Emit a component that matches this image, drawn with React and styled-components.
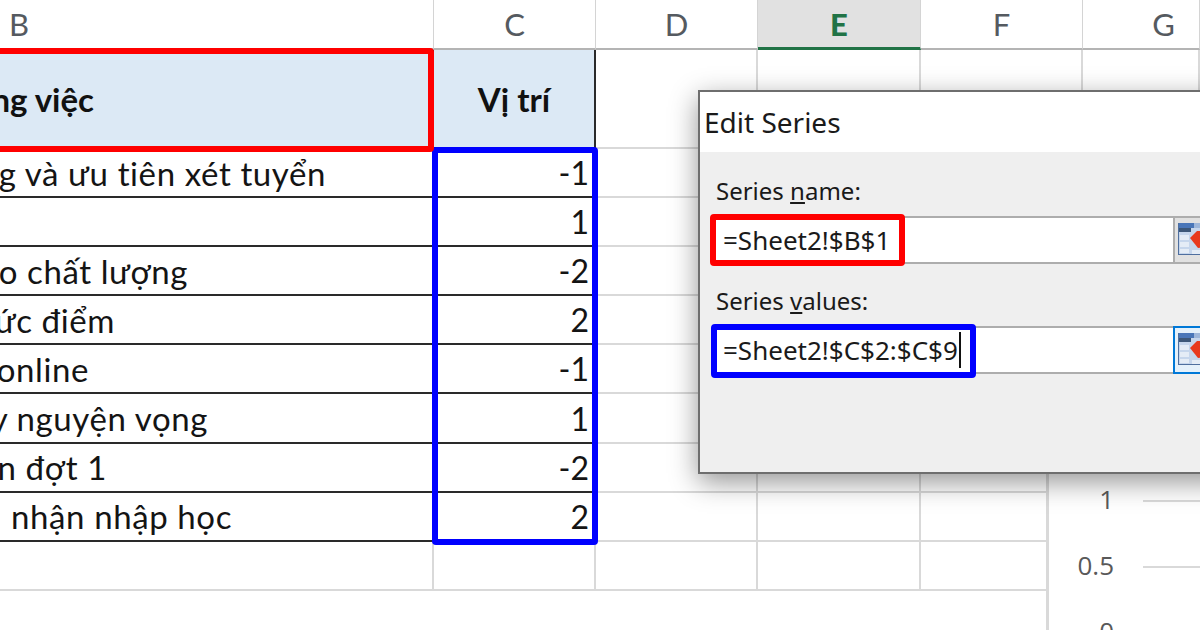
import React from "react";
import styled, { createGlobalStyle } from "styled-components";

const GlobalStyle = createGlobalStyle`
  html, body {
    margin: 0;
    padding: 0;
    overflow: hidden;
    background: #fff;
  }
`;

const COLUMNS = "434px 162px 162px 163px 162px 117px";

const rows = [
  { task: "g và ưu tiên xét tuyển", end: 108, pos: "-1" },
  { task: "", end: 0, pos: "1" },
  { task: "o chất lượng", end: 246, pos: "-2" },
  { task: "ức điểm", end: 319, pos: "2" },
  { task: "online", end: 345, pos: "-1" },
  { task: "y nguyện vọng", end: 226, pos: "1" },
  { task: "n đợt 1", end: 327, pos: "-2" },
  { task: "nhận nhập học", end: 202, pos: "2" },
];

const App = () => {
  return (
    <Sheet>
      <GlobalStyle />
      <HeaderRow>
        <ColHead $end={404}>B</ColHead>
        <ColHead>C</ColHead>
        <ColHead>D</ColHead>
        <ColHead $active>E</ColHead>
        <ColHead>F</ColHead>
        <ColHead $pad={0}>G</ColHead>
      </HeaderRow>

      <TitleRow>
        <TitleCell $end={338}>ng việc</TitleCell>
        <TitleCell>Vị trí</TitleCell>
        <EmptyCell />
        <EmptyCell />
        <EmptyCell />
        <EmptyCell />
      </TitleRow>

      {rows.map((row) => (
        <Row key={row.pos + row.end}>
          <TaskCell $end={row.end}>{row.task}</TaskCell>
          <ValueCell>{row.pos}</ValueCell>
          <EmptyCell />
          <EmptyCell />
          <EmptyCell />
          <EmptyCell />
        </Row>
      ))}
      <Row>
        <EmptyCell />
        <EmptyCell />
        <EmptyCell />
        <EmptyCell />
        <EmptyCell />
        <EmptyCell />
      </Row>

      <BlueRange />
      <RedRange />

      <Chart>
        <AxisRow $top={27}>
          <AxisLabel>1</AxisLabel>
          <AxisLine />
        </AxisRow>
        <AxisRow $top={93}>
          <AxisLabel>0.5</AxisLabel>
          <AxisLine />
        </AxisRow>
        <AxisRow $top={159}>
          <AxisLabel>0</AxisLabel>
          <AxisLine />
        </AxisRow>
      </Chart>

      <Dialog>
        <DialogTitle>Edit Series</DialogTitle>
        <DialogBody>
          <FieldLabel>
            Series <u>n</u>ame:
          </FieldLabel>
          <Field>
            <FieldInput>
              =Sheet2!$B$1
              <FieldMark $color="#ff0000" $left={-6} $top={-4} $width={195} $height={52} />
            </FieldInput>
            <RangeButton>
              <RangeIcon />
            </RangeButton>
          </Field>
          <FieldLabel $gap={22}>
            Series <u>v</u>alues:
          </FieldLabel>
          <Field>
            <FieldInput>
              =Sheet2!$C$2:$C$9
              <Caret />
              <FieldMark $color="#0000ff" $left={-5} $top={-4} $width={265} $height={54} />
            </FieldInput>
            <RangeButton $focused>
              <RangeIcon />
            </RangeButton>
          </Field>
        </DialogBody>
      </Dialog>
    </Sheet>
  );
};

// range picker button, only the left part shows in the crop
const RangeIcon = () => (
  <svg width="34" height="34" viewBox="0 0 34 34">
    <rect x="0" y="0" width="34" height="32" fill="#c6d6ec" />
    <rect x="0" y="0" width="16" height="5" fill="#4a76b8" />
    <rect x="16" y="0" width="18" height="5" fill="#9db6da" />
    <rect x="0" y="5" width="13" height="4" fill="#3d5778" />
    <rect x="2" y="12" width="9" height="5" fill="#e4ecf6" />
    <rect x="2" y="19" width="9" height="5" fill="#e4ecf6" />
    <rect x="2" y="26" width="9" height="4" fill="#e4ecf6" />
    <rect x="0" y="0" width="1" height="32" fill="#4f6f9f" />
    <rect x="0" y="31" width="34" height="1" fill="#4f6f9f" />
    <path d="M12 15 L19 8 H34 V22 L26 24 L20 25 Z" fill="#e8391d" />
    <rect x="14" y="27" width="20" height="4" fill="#e4ecf6" />
  </svg>
);

export default App;

const Sheet = styled.div`
  position: relative;
  width: 1200px;
  height: 630px;
  overflow: hidden;
  background: #fff;
  font-family: "Lato", "Liberation Sans", sans-serif;
  color: #141414;
`;

const HeaderRow = styled.div`
  display: grid;
  grid-template-columns: ${COLUMNS};
  height: 50px;
`;

const ColHead = styled.div`
  display: flex;
  align-items: center;
  justify-content: ${(p) => (p.$end ? "flex-end" : "center")};
  padding-right: ${(p) => (p.$end ? `${p.$end}px` : "0")};
  padding-left: ${(p) => (p.$pad === 0 ? "45px" : "0")};
  font-size: 31px;
  box-sizing: border-box;
  color: ${(p) => (p.$active ? "#217346" : "#555a60")};
  font-weight: ${(p) => (p.$active ? 900 : 400)};
  background: ${(p) => (p.$active ? "#e1e1e1" : "#fff")};
  border-right: 1px solid #d4d4d4;
  border-bottom: ${(p) => (p.$active ? "3px solid #217346" : "2px solid #b4b4b4")};
`;

const TitleRow = styled.div`
  display: grid;
  grid-template-columns: ${COLUMNS};
  height: 99px;
`;

const TitleCell = styled.div`
  display: flex;
  align-items: center;
  justify-content: ${(p) => (p.$end ? "flex-end" : "center")};
  padding-right: ${(p) => (p.$end ? `${p.$end}px` : "0")};
  box-sizing: border-box;
  background: #dce9f5;
  font-size: 33px;
  font-weight: 700;
  white-space: nowrap;
  color: #111;
  border-bottom: 2px solid #2a2a2a;
  border-right: 2px solid #2a2a2a;
`;

const Row = styled.div`
  display: grid;
  grid-template-columns: ${COLUMNS};
  height: 49.1px;
`;

const TaskCell = styled.div`
  display: flex;
  align-items: center;
  justify-content: flex-end;
  padding-right: ${(p) => p.$end}px;
  box-sizing: border-box;
  font-size: 33px;
  letter-spacing: 0.6px;
  white-space: nowrap;
  overflow: hidden;
  border-bottom: 2px solid #2a2a2a;
`;

const ValueCell = styled.div`
  display: flex;
  align-items: center;
  justify-content: flex-end;
  padding-right: 5px;
  box-sizing: border-box;
  font-size: 32px;
  border-bottom: 2px solid #2a2a2a;
  border-right: 2px solid #2a2a2a;
`;

const EmptyCell = styled.div`
  box-sizing: border-box;
  border-right: 2px solid #d9d9d9;
  border-bottom: 2px solid #d9d9d9;
`;

const RedRange = styled.div`
  position: absolute;
  left: -10px;
  top: 48px;
  width: 444px;
  height: 104px;
  box-sizing: border-box;
  border: 6px solid #ff0000;
  border-radius: 4px;
`;

const BlueRange = styled.div`
  position: absolute;
  left: 432px;
  top: 147px;
  width: 166px;
  height: 398px;
  box-sizing: border-box;
  border: 6px solid #0000ff;
  border-radius: 4px;
`;

const Chart = styled.div`
  position: absolute;
  left: 1046px;
  top: 473px;
  width: 154px;
  height: 157px;
  background: #fff;
  border-left: 3px solid #d9d9d9;
`;

const AxisRow = styled.div`
  position: absolute;
  left: 0;
  right: 0;
  top: ${(p) => p.$top}px;
  display: flex;
  align-items: center;
  height: 2px;
`;

const AxisLabel = styled.span`
  width: 65px;
  margin-top: -4px;
  text-align: right;
  font-family: "Open Sans", sans-serif;
  font-size: 26px;
  color: #595959;
`;

const AxisLine = styled.span`
  margin-left: 29px;
  flex: 1;
  height: 2px;
  background: #d9d9d9;
`;

const Dialog = styled.div`
  position: absolute;
  left: 698px;
  top: 90px;
  width: 540px;
  height: 384px;
  box-sizing: border-box;
  border: 2px solid #6e6e6e;
  background: #efefef;
  box-shadow: 0 8px 26px rgba(0, 0, 0, 0.42);
  font-family: "Noto Sans", "Open Sans", sans-serif;
  color: #1a1a1a;
`;

const DialogTitle = styled.div`
  display: flex;
  align-items: center;
  height: 60px;
  padding-left: 4px;
  background: #fff;
  font-size: 28px;
`;

const DialogBody = styled.div`
  padding: 24px 0 0 16px;
`;

const FieldLabel = styled.div`
  margin-top: ${(p) => p.$gap || 0}px;
  margin-bottom: 10px;
  height: 30px;
  line-height: 30px;
  font-size: 24px;
`;

const Field = styled.div`
  display: flex;
  height: 48px;
`;

const FieldInput = styled.div`
  position: relative;
  display: flex;
  align-items: center;
  width: 457px;
  box-sizing: border-box;
  padding-left: 7px;
  background: #fff;
  border: solid #adadad;
  border-width: 2px 0;
  font-size: 26px;
`;

const FieldMark = styled.div`
  position: absolute;
  left: ${(p) => p.$left}px;
  top: ${(p) => p.$top}px;
  width: ${(p) => p.$width}px;
  height: ${(p) => p.$height}px;
  box-sizing: border-box;
  border: 6px solid ${(p) => p.$color};
  border-radius: 4px;
`;

const Caret = styled.span`
  width: 2px;
  height: 36px;
  margin-left: 1px;
  background: #111;
`;

const RangeButton = styled.div`
  width: 44px;
  box-sizing: border-box;
  padding: 5px 0 0 3px;
  overflow: hidden;
  background: ${(p) => (p.$focused ? "#e5f1fb" : "#e1e1e1")};
  border: 2px solid ${(p) => (p.$focused ? "#0078d7" : "#adadad")};
`;
